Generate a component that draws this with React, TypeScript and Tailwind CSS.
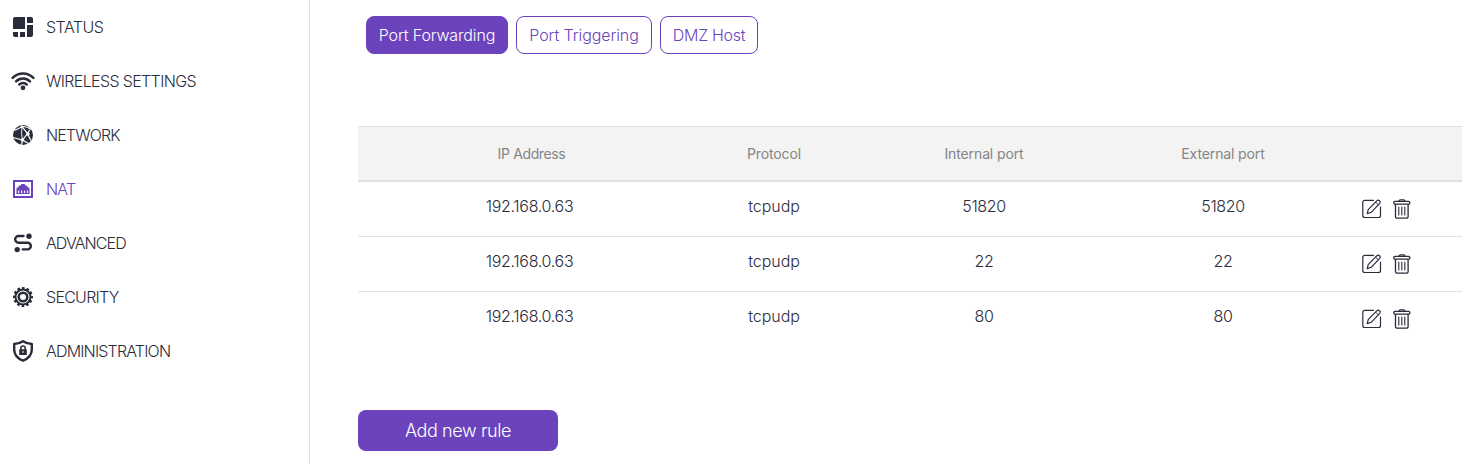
import React from "react";

const StatusIcon = () => (
  <svg width="20" height="20" viewBox="0 0 20 20" fill="currentColor">
    <path d="M2 0h10v12H0V2a2 2 0 0 1 2-2zM14 0h4a2 2 0 0 1 2 2v4h-6zM14 8h6v10a2 2 0 0 1-2 2h-4zM0 15h5v5H2a2 2 0 0 1-2-2zM7 15h5v5H7z" />
  </svg>
);

const WifiIcon = () => (
  <svg width="24" height="20" viewBox="0 0 24 20" fill="none" stroke="currentColor" strokeWidth="2.5" strokeLinecap="round">
    <path d="M1.6 6.8C7.4 .9 16.6 .9 22.4 6.8M5.1 10.3c3.8-3.9 10-3.9 13.8 0M8.4 13.5c2-2 5.2-2 7.2 0" />
    <circle cx="12" cy="16.8" r="2.4" fill="currentColor" stroke="none" />
  </svg>
);

const NetworkIcon = () => (
  <svg width="20" height="20" viewBox="0 0 20 20">
    <circle cx="10" cy="10" r="10" fill="currentColor" />
    <g fill="none" stroke="#fff" strokeWidth="1.2">
      <path d="M1.500 5.500 9 1.700M9 1.700 14.500 8.500 9.500 15 0 12.500M10 1.500Q14.500 1.400 18 4.500M14.500 8.500 17.500 3.500M14.500 8.500 17.800 15.500M9.500 15 8.500 20M9.500 15 15.500 18.500" />
      <path d="M9 1.700Q7.800 8 9.500 15" strokeWidth=".9" />
    </g>
    <g fill="#fff">
      <circle cx="9" cy="1.800" r="1.300" />
      <circle cx="15" cy="9" r="1.700" />
      <circle cx="9.500" cy="15" r="1.700" />
    </g>
  </svg>
);

const NatIcon = () => (
  <svg width="20" height="18" viewBox="0 0 20 18">
    <rect x="1" y="1" width="18" height="16" fill="none" stroke="currentColor" strokeWidth="2" />
    <path d="M3.500 14V8.500a1 1 0 0 1 1-1H5.500V6.500a1 1 0 0 1 1-1H8V4.500q0-.5.500-.5h3q.5 0 .5.500v1h1.500a1 1 0 0 1 1 1v1h1a1 1 0 0 1 1 1V14z" fill="currentColor" />
    <path d="M5.700 10.500V13M8.600 10.500V13M11.500 10.500V13M14.400 10.500V13" stroke="#fff" strokeWidth="1.100" />
  </svg>
);

const AdvancedIcon = () => (
  <svg width="20" height="20" viewBox="0 0 20 20" fill="none" stroke="currentColor" strokeWidth="2.400" strokeLinecap="round">
    <path d="M10.500 3H5.500a3.300 3.300 0 0 0 0 6.700h9a3.300 3.300 0 0 1 0 6.700H9.800" />
    <circle cx="16" cy="3.200" r="2.700" fill="currentColor" stroke="none" />
    <circle cx="4.200" cy="16.600" r="2.700" fill="currentColor" stroke="none" />
  </svg>
);

const GearIcon = () => (
  <svg width="20" height="20" viewBox="0 0 20 20" fill="none" stroke="currentColor">
    <circle cx="10" cy="10" r="8.800" strokeWidth="2.400" strokeDasharray="2.600 2.007" strokeDashoffset="1.300" />
    <circle cx="10" cy="10" r="7.500" strokeWidth="2" />
    <circle cx="10" cy="10" r="4.300" strokeWidth="2.500" />
  </svg>
);

const ShieldIcon = () => (
  <svg width="20" height="22" viewBox="0 0 20 22" fill="none" stroke="currentColor">
    <path d="M10 1.300Q6.500 3.700 1.200 4V9.500c0 5.200 3.300 9 8.800 11.200 5.500-2.200 8.800-6 8.800-11.200V4Q13.500 3.700 10 1.300z" strokeWidth="2.400" strokeLinejoin="round" />
    <path d="M7.900 10V8a2.100 2.100 0 0 1 4.200 0v2" strokeWidth="1.500" />
    <path d="M6.200 9.300h7.600V15H6.200z" fill="currentColor" stroke="none" />
    <path d="M10 11.200v1.600" stroke="#fff" strokeWidth="1.300" />
  </svg>
);

const EditIcon = () => (
  <svg width="20" height="20" viewBox="0 0 20 20" fill="none" stroke="currentColor" strokeWidth="1.200" strokeLinejoin="round" strokeLinecap="round">
    <path d="M11.500 1.300H2.800a2 2 0 0 0-2 2V16.500a2 2 0 0 0 2 2H16.500a2 2 0 0 0 2-2V8" />
    <path d="M5.200 14.600 6.200 10.600 15 1.700q1.200-1 2.500.1t.2 2.600L9.200 13.300z" />
    <path d="m13.600 3.200 2.700 2.600" strokeWidth="1" />
  </svg>
);

const TrashIcon = () => (
  <svg width="18" height="20" viewBox="0 0 18 20" fill="none" stroke="currentColor" strokeWidth="1.300" strokeLinejoin="round">
    <path d="M6.200 2.300V1.900A1.100 1.100 0 0 1 7.300.8h3.400a1.100 1.100 0 0 1 1.100 1.100v.4" />
    <rect x=".8" y="2.400" width="16" height="2.700" rx="1.200" />
    <path d="M2.500 5.100V17.400a1.800 1.800 0 0 0 1.800 1.800h9a1.800 1.800 0 0 0 1.800-1.800V5.100" />
    <path d="M5.800 8v8M8.800 8v8M11.800 8v8" strokeWidth="1.100" strokeLinecap="round" />
  </svg>
);

const navigation = [
  { label: "STATUS", icon: <StatusIcon />, style: "tracking-[-0.5px]" },
  { label: "WIRELESS SETTINGS", icon: <WifiIcon />, style: "tracking-[-0.65px]" },
  { label: "NETWORK", icon: <NetworkIcon />, style: "tracking-[-0.9px]" },
  { label: "NAT", icon: <NatIcon />, style: "tracking-[-0.8px] text-[#6b43bd]" },
  { label: "ADVANCED", icon: <AdvancedIcon />, style: "tracking-[-0.9px]" },
  { label: "SECURITY", icon: <GearIcon />, style: "tracking-[-0.72px]" },
  { label: "ADMINISTRATION", icon: <ShieldIcon />, style: "tracking-[-0.82px]" },
];

const rules = [
  { ip: "192.168.0.63", protocol: "tcpudp", internal: "51820", external: "51820" },
  { ip: "192.168.0.63", protocol: "tcpudp", internal: "22", external: "22" },
  { ip: "192.168.0.63", protocol: "tcpudp", internal: "80", external: "80" },
];

export default function App() {
  return (
    <div className="flex h-[464px] w-full overflow-hidden bg-white font-['Inter',sans-serif] text-base font-light text-[#2b2c3b]">
      <nav className="flex w-[310px] shrink-0 flex-col border-r border-[#dedfe2]">
        {navigation.map((item) => (
          <a key={item.label} href="#" className={`flex h-[54px] items-center gap-[11px] pl-[11px] leading-6 whitespace-nowrap ${item.style}`}>
            <span className="flex w-6 justify-center">{item.icon}</span>
            <span>{item.label}</span>
          </a>
        ))}
      </nav>
      <main className="min-w-0 flex-1 pl-12">
        <div className="flex gap-2 pt-4 pl-2 whitespace-nowrap text-[#6b43bd]">
          <button className="h-[38px] w-[142px] rounded-lg border border-[#6b43bd] bg-[#6b43bd] tracking-[-0.15px] text-white">Port Forwarding</button>
          <button className="h-[38px] w-[136px] rounded-lg border border-[#6b43bd] tracking-[-0.1px]">Port Triggering</button>
          <button className="h-[38px] w-[98px] rounded-lg border border-[#6b43bd] tracking-[-0.3px]">DMZ Host</button>
        </div>
        <div className="mt-[72px]">
          <div className="grid h-14 grid-cols-[32px_282px_204px_216px_262px_1fr] items-center border-t border-b-2 border-t-[#dedfe2] border-b-[#dee2e6] bg-[#f3f3f3] text-center text-sm font-normal tracking-[-0.12px] text-[#858585]">
            <span />
            <span className="pl-px tracking-[-0.36px]">IP Address</span>
            <span>Protocol</span>
            <span>Internal port</span>
            <span>External port</span>
            <span />
          </div>
          {rules.map((rule, index) => (
            <div key={index} className="grid h-[55px] grid-cols-[32px_282px_204px_216px_262px_1fr] items-start border-b border-[#dee2e6] pt-3 text-center leading-6 tracking-[-0.3px] last:border-b-0">
              <span />
              <span className="pr-[3px]">{rule.ip}</span>
              <span className="tracking-[-0.05px]">{rule.protocol}</span>
              <span className="tracking-[-0.4px]">{rule.internal}</span>
              <span className="tracking-[-0.4px]">{rule.external}</span>
              <span className="flex gap-[11px] pt-[5px] pl-2">
                <button aria-label="Edit rule"><EditIcon /></button>
                <button aria-label="Delete rule"><TrashIcon /></button>
              </span>
            </div>
          ))}
        </div>
        <button className="mt-[63px] h-[41px] w-[200px] rounded-lg bg-[#6b43bd] text-lg tracking-[-0.4px] text-white">Add new rule</button>
      </main>
    </div>
  );
}
